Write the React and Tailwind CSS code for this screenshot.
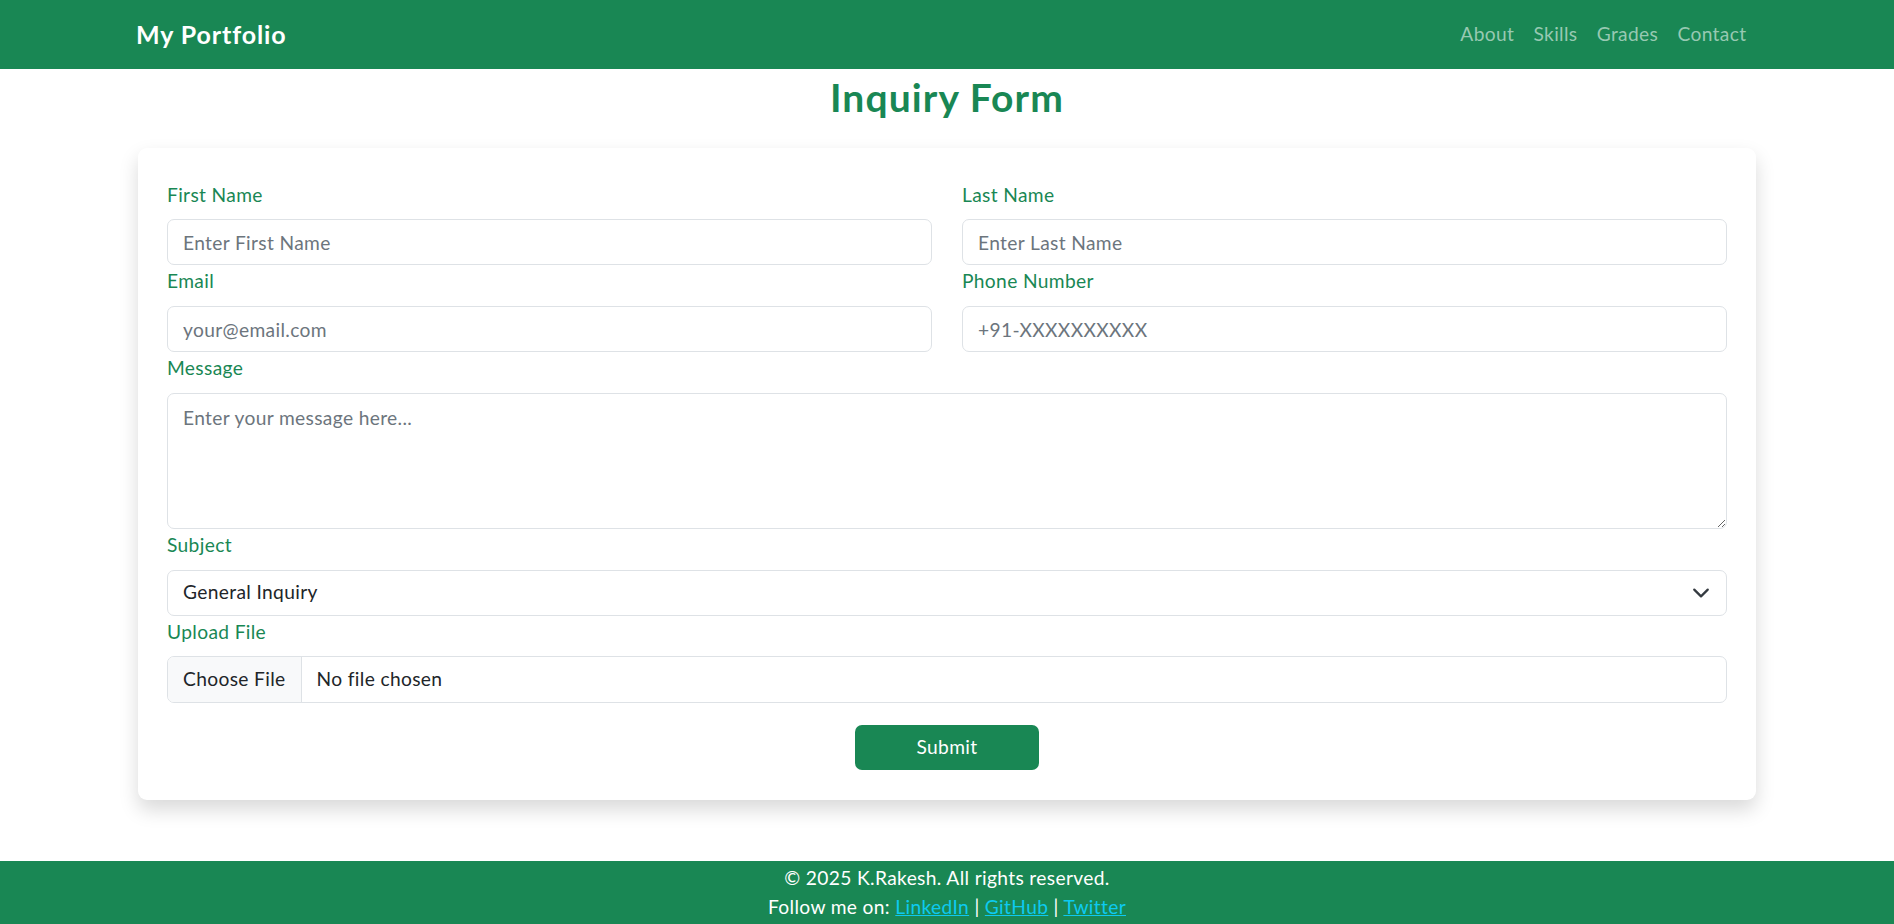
import React from "react";

const Field = ({ label, children }) => (
  <div className="flex flex-col">
    <label className="text-[19.2px] leading-[28.8px] text-[#198754] mb-[9.6px]">{label}</label>
    {children}
  </div>
);

const inputCls =
  "w-full h-[46.5px] border border-[#dee2e6] rounded-[7px] px-[15px] text-[19.2px] tracking-[0.35px] text-[#212529] placeholder:text-[#6c757d] bg-white outline-none";

const App = () => {
  return (
    <div className="min-h-[924px] flex flex-col bg-white font-['Lato',sans-serif] tracking-[0.35px]">
      {/* Navbar */}
      <nav className="bg-[#198754] h-[69px] shrink-0">
        <div className="max-w-[1618px] mx-auto h-full flex items-center justify-between">
          <a href="#" className="text-white text-[25px] font-bold tracking-[0.9px] -ml-[2px]">
            My Portfolio
          </a>
          <div className="flex items-center text-[19.2px] text-[#97c9b2]">
            <a href="#" className="px-[9.6px]">About</a>
            <a href="#" className="px-[9.6px]">Skills</a>
            <a href="#" className="px-[9.6px]">Grades</a>
            <a href="#" className="px-[9.6px]">Contact</a>
          </div>
        </div>
      </nav>

      {/* Title */}
      <h2 className="mt-[5px] mb-[28px] text-center text-[39px] leading-[46px] font-bold tracking-[1.1px] text-[#198754]">
        Inquiry Form
      </h2>

      {/* Card */}
      <div className="w-[1618px] mx-auto bg-white rounded-[9px] shadow-[0_9.6px_19.2px_rgba(0,0,0,0.15)] px-[29px] pt-[32.5px] pb-[30px] flex flex-col gap-[2px]">
        <div className="grid grid-cols-2 gap-x-[30px] gap-y-[2px]">
          <Field label="First Name">
            <input className={inputCls} placeholder="Enter First Name" />
          </Field>
          <Field label="Last Name">
            <input className={inputCls} placeholder="Enter Last Name" />
          </Field>
          <Field label="Email">
            <input className={inputCls} placeholder="your@email.com" />
          </Field>
          <Field label="Phone Number">
            <input className={inputCls} placeholder="+91-XXXXXXXXXX" />
          </Field>
        </div>

        <Field label="Message">
          <textarea
            className="w-full h-[136.5px] border border-[#dee2e6] rounded-[7px] px-[15px] pt-[10px] pb-[8px] text-[19.2px] leading-[28.8px] tracking-[0.35px] text-[#212529] placeholder:text-[#6c757d] outline-none resize-y"
            placeholder="Enter your message here..."
          />
        </Field>

        <Field label="Subject">
          <div className="relative">
            <select className={inputCls + " appearance-none pr-[48px]"} defaultValue="general">
              <option value="general">General Inquiry</option>
              <option value="support">Support</option>
              <option value="feedback">Feedback</option>
            </select>
            <svg
              className="absolute right-[17px] top-1/2 -translate-y-1/2 pointer-events-none"
              width="18"
              height="18"
              viewBox="0 0 16 16"
              fill="none"
              stroke="#343a40"
              strokeWidth="2"
              strokeLinecap="round"
              strokeLinejoin="round"
            >
              <path d="m2 5 6 6 6-6" />
            </svg>
          </div>
        </Field>

        <Field label="Upload File">
          <label className="w-full h-[46.5px] border border-[#dee2e6] rounded-[7px] flex items-center overflow-hidden text-[19.2px] text-[#212529] cursor-pointer">
            <span className="h-full flex items-center px-[15px] bg-[#f8f9fa] border-r border-[#dee2e6]">
              Choose File
            </span>
            <span className="pl-[15px]">No file chosen</span>
            <input type="file" className="hidden" />
          </label>
        </Field>

        <div className="flex justify-center mt-[20px]">
          <button className="w-[184px] h-[45px] bg-[#198754] text-white text-[19.2px] tracking-[0.35px] rounded-[7px]">
            Submit
          </button>
        </div>
      </div>

      {/* Footer */}
      <footer className="mt-auto bg-[#198754] text-white text-center text-[19.2px] leading-[29px] pt-[2px] pb-[3px]">
        <p>© 2025 K.Rakesh. All rights reserved.</p>
        <p>
          Follow me on:{" "}
          <a href="#" className="text-[#0dcaf0] underline">LinkedIn</a> |{" "}
          <a href="#" className="text-[#0dcaf0] underline">GitHub</a> |{" "}
          <a href="#" className="text-[#0dcaf0] underline">Twitter</a>
        </p>
      </footer>
    </div>
  );
};

export default App;
